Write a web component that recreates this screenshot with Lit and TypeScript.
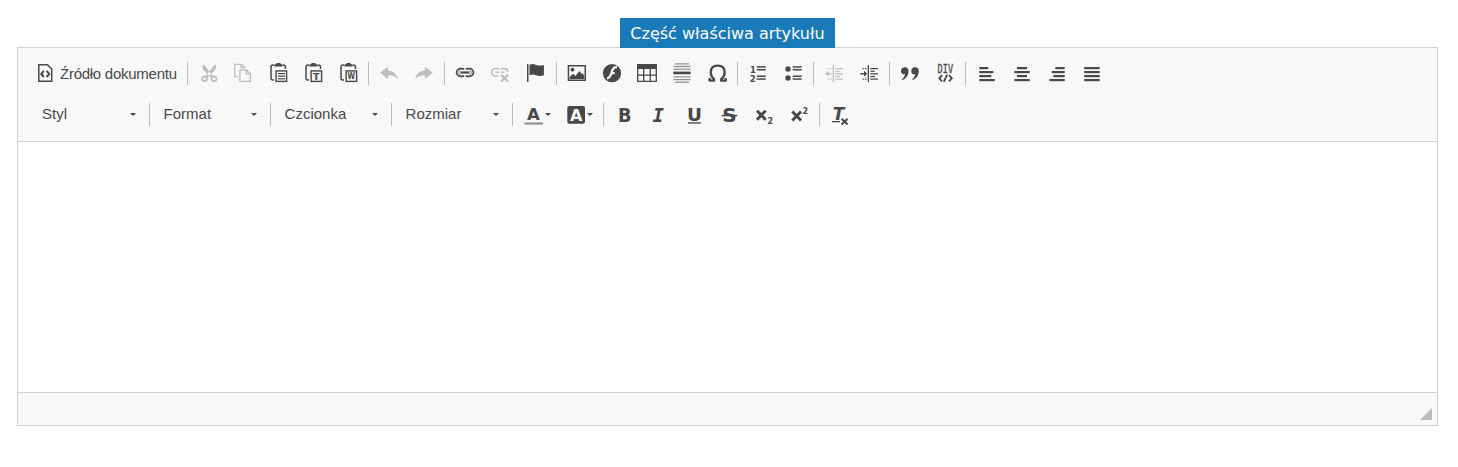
import { LitElement, html, css, svg } from "lit";
import { customElement, property } from "lit/decorators.js";

const bars = (rows: number[][], h = 1.7) =>
  rows.map(([x, y, w]) => svg`<rect x=${x} y=${y} width=${w} height=${h} />`);

const clipboard = svg`
  <path d="M8 4H7Q5 4 5 6V17Q5 19 7 19H8M17 4Q19.500 4 19.500 6V8" fill="none" stroke="currentColor" stroke-width="1.500" />
  <path d="M8.300 5.400V4Q8.300 3.300 9.300 3.300H10Q10.200 2 11.300 2H13.700Q14.800 2 15 3.300H15.700Q16.700 3.300 16.700 4V5.400Z" />
  <rect x="10.100" y="9.900" width="10.500" height="10.500" fill="none" stroke="currentColor" stroke-width="1.400" />`;

const chain = svg`<g fill="none" stroke="currentColor" stroke-width="1.700">
  <path d="M11 8.500Q10.500 7.600 9 7.600H7.500A3.900 3.900 0 0 0 7.500 15.400H9Q10.500 15.400 11 14.500M13 8.500Q13.500 7.600 15 7.600H16.500A3.900 3.900 0 0 1 16.500 15.400H15Q13.500 15.400 13 14.500" />
  <path d="M7.500 13.500A1.900 1.900 0 0 1 7.500 9.600M16.500 9.600A1.900 1.900 0 0 1 16.500 13.500" stroke-width=".6" />
  <path d="M7.500 11.500H16.500" stroke-width="2.200" /></g>`;

const dent = svg`<rect x="10.700" y="4" width="1.300" height="17" />
  ${bars([[13.300, 7, 7.700], [13.300, 12.200, 7.700], [13.300, 17.500, 7.700]], 1.200)}
  ${bars([[13.300, 9.600, 4.500], [13.300, 14.900, 4.500]], 1.200)}
  ${bars([[5.500, 7, 1.400], [8, 7, 1.400], [5.500, 17.500, 1.400], [8, 17.500, 1.400]], 1.200)}`;

const icons: Record<string, unknown> = {
  source: svg`<path d="M5.800 3.800H14.500L18.700 8V20.200H5.800Z" fill="none" stroke="currentColor" stroke-width="1.500" />
    <path d="M10.800 9.800L8.300 12.900L10.800 16M13.700 9.800L16.200 12.900L13.700 16" fill="none" stroke="currentColor" stroke-width="2" />`,
  cut: svg`<path d="M6.300 4L8 3.800L17.300 15.500L14.500 16.500L7 8.500ZM20.300 4L18.600 3.800L9.500 15.500L12 16.500L19.500 8.500Z" />
    <g fill="none" stroke="currentColor" stroke-width="1.700"><circle cx="8.600" cy="17.700" r="2.400" /><circle cx="18" cy="17.700" r="2.400" /></g>`,
  copy: svg`<g fill="none" stroke="currentColor" stroke-width="1.300">
    <path d="M7 15.700H3.700V3.300H10.500L14 6.700M10 3.500V6.500H13.500" />
    <path d="M8.900 8.900H15.500L19.400 12.800V20.400H8.900ZM15.300 9V12.900H19.300" /></g>`,
  paste: svg`${clipboard}${bars([[12, 12, 7], [12, 14.600, 7], [12, 17.200, 7]], 1.200)}`,
  pasteText: svg`${clipboard}<text x="15.350" y="18.600" font-size="9.500">T</text>`,
  pasteWord: svg`${clipboard}<text x="15.350" y="18.400" font-size="9" textLength="7.500" lengthAdjust="spacingAndGlyphs">W</text>`,
  undo: svg`<path d="M3.200 11.700L11 5.700V9.400Q18.500 9.700 21 18.200Q17.500 14 11 14.200V18Z" />`,
  redo: svg`<path d="M20.900 11.700L13 5.700V9.400Q5.500 9.700 3 18.200Q6.500 14 13 14.200V18Z" />`,
  link: chain,
  unlink: svg`<g fill="none" stroke="currentColor" stroke-width="1.600">
    <path d="M11 8.500Q10.500 7.500 9 7.500H7.500A3.700 3.700 0 0 0 7.500 15H10.500M13 8.500Q13.500 7.500 15 7.500H16.500Q19.500 7.800 19.800 11M7.500 11.300H11.500M13.500 11.300H16.500" />
    <path d="M13 13.700L20 20.500M20 13.700L13 20.500" stroke-width="2.300" /></g>`,
  flag: svg`<rect x="4" y="3" width="1.500" height="18" />
    <path d="M6.500 3.700Q10 2.200 13 4Q17 5.200 20.900 3.900V14.300Q17 15.800 13 14.300Q10 12.700 6.500 14.200Z" />`,
  image: svg`<path d="M2.700 4H21V20H2.700ZM4.200 5.500V18.500H19.500V5.500Z" fill-rule="evenodd" />
    <circle cx="7.500" cy="8.700" r="1.900" /><path d="M4.700 18V16L8 12.800L10.500 15L14.500 10L16.500 13L17.500 12L19.200 15V18Z" />`,
  flash: svg`<circle cx="12" cy="12.200" r="9.100" />
    <path d="M17 6.200Q12.800 6 11.700 11Q10.500 16.500 7 17.500M10.500 12.200H14.700" fill="none" stroke="#f8f8f8" stroke-width="2.200" />`,
  table: svg`<rect x="2" y="3" width="20" height="5" />
    <path d="M2.700 8V20.300H21.300V8M2.700 14.200H21.300M8.700 8V20.300M15.300 8V20.300" fill="none" stroke="currentColor" stroke-width="1.300" />`,
  rule: svg`<g opacity=".6">${bars([[5, 2.300, 14], [3.500, 4.900, 17], [3.500, 7.600, 17], [3.500, 15.300, 17], [3.500, 18, 17], [5, 20.600, 14]], 1.200)}</g>
    <rect x="3.300" y="10.600" width="17.400" height="2.600" />`,
  omega: svg`<path d="M4.500 19.600H9V18Q5.800 15.600 5.800 11.300Q5.800 4.700 12.700 4.700Q19.600 4.700 19.600 11.300Q19.600 15.600 16.300 18V19.600H20.700M4.600 17V20.500M20.700 17V20.500" fill="none" stroke="currentColor" stroke-width="2.300" />`,
  ordered: svg`${bars([[10.700, 5.200, 9], [10.700, 8, 9], [10.700, 14.500, 9], [10.700, 17.300, 9]], 1.500)}
    <text x="7" y="11.500" font-size="8.500">1</text><text x="6.700" y="20.800" font-size="8.500">2</text>`,
  bullets: svg`${bars([[11.700, 5.200, 9], [11.700, 8, 9], [11.700, 14.500, 9], [11.700, 17.300, 9]], 1.500)}
    <circle cx="7" cy="8" r="2.700" /><circle cx="7" cy="17" r="2.700" />`,
  outdent: svg`${dent}<path d="M3.300 12.800L6.500 10V12.200H9.500V13.400H6.500V15.600Z" />`,
  indent: svg`${dent}<path d="M10.200 12.800L7 9.800V12H3.300V13.600H7V15.800Z" />`,
  quote: svg`<path d="M7 6.300Q10.800 6.500 10.500 10.700Q10 16.800 4.300 19.300L3.900 18.500Q6.600 16.500 7 13.300Q3 13.800 3 10Q3.200 6.400 7 6.300ZM17 6.300Q21 6.500 20.800 10.700Q20.200 16.800 14.600 19.300L14.200 18.500Q16.900 16.500 17.200 13.300Q13.300 13.800 13.300 10Q13.500 6.400 17 6.300Z" />`,
  div: svg`<text class="thin" x="12.300" y="12" font-size="12.500" textLength="15.500" lengthAdjust="spacingAndGlyphs">DIV</text>
    <path d="M9 14.200L6.300 17.300L9 20.400M16 14.200L18.800 17.300L16 20.400M14.200 13.700L10.800 20.800" fill="none" stroke="currentColor" stroke-width="1.800" />`,
  left: bars([[5.300, 6, 9], [5.300, 10, 14], [5.300, 14, 12], [5.300, 18, 15.400]], 2.200),
  center: bars([[8, 6, 10], [5.300, 10, 15.400], [8, 14, 10], [5.300, 18, 15.400]], 2.200),
  right: bars([[11.300, 6, 9.400], [7.700, 10, 13], [9.300, 14, 11.400], [5.500, 18, 15.200]], 2.200),
  justify: bars([[5.200, 6, 15.500], [5.200, 10, 15.500], [5.200, 14, 15.500], [5.200, 18, 15.500]], 2.200),
  color: svg`<text x="12.300" y="17.800" font-size="16.500">A</text><rect x="3.300" y="20.300" width="18.700" height="2.400" fill="#999" />`,
  fill: svg`<rect x="4.300" y="4" width="17.700" height="17.700" rx="2" /><text x="13.100" y="18.600" font-size="16" fill="#f8f8f8">A</text>`,
  bold: svg`<text x="12.700" y="20" font-size="19" textLength="13.500" lengthAdjust="spacingAndGlyphs">B</text>`,
  italic: svg`<text class="mono" x="11.200" y="20" font-size="19" font-style="italic">I</text>`,
  underline: svg`<text x="12.500" y="18.600" font-size="17.500" textLength="15" lengthAdjust="spacingAndGlyphs">U</text><rect x="6" y="20.300" width="13" height="1.300" />`,
  strike: svg`<text x="12.500" y="20" font-size="19" textLength="14.500" lengthAdjust="spacingAndGlyphs">S</text><rect x="4.700" y="12.800" width="15.600" height="1.500" />`,
  sub: svg`<path d="M5 8.700L13.700 17.700M13.700 8.700L5 17.700" stroke="currentColor" stroke-width="2.900" />
    <text x="18.300" y="21.700" font-size="8">2</text>`,
  sup: svg`<path d="M5.300 9.500L14 18.500M14 9.500L5.300 18.500" stroke="currentColor" stroke-width="2.900" />
    <text x="18.300" y="11.700" font-size="8">2</text>`,
  erase: svg`<text x="10.600" y="18" font-size="17" font-style="italic">T</text><rect x="4" y="19" width="8" height="1.300" />
    <path d="M13.600 16.700L19.500 22.500M19.500 16.700L13.600 22.500" stroke="currentColor" stroke-width="1.900" />`,
};

const disabled = new Set(["cut", "copy", "undo", "redo", "unlink", "outdent"]);

@customElement("editor-icon")
class EditorIcon extends LitElement {
  @property() name = "";
  static styles = css`
    :host { display: block; width: 25px; height: 25px; flex: none; }
    svg { display: block; overflow: visible; }
    text { font-family: "DejaVu Sans", sans-serif; font-weight: 700; text-anchor: middle; }
    .mono { font-family: "DejaVu Sans Mono", monospace; }
    .thin { font-family: "DejaVu Sans Mono", monospace; font-weight: 400; stroke: currentColor; stroke-width: .3px; }
  `;
  render() {
    return html`<svg width="25" height="25" viewBox="0 0 25 25" fill="currentColor">${icons[this.name]}</svg>`;
  }
}

@customElement("app-root")
class AppRoot extends LitElement {
  static styles = css`
    :host {
      display: flex; flex-direction: column; align-items: center; box-sizing: border-box;
      height: 467px; padding: 18px 20px 41px 17px; background: #fff;
      color: #484848; font: 15px/25px "Liberation Sans", Arial, sans-serif;
    }
    .title {
      position: relative; z-index: 1; box-sizing: border-box; width: 215px; height: 30px;
      margin-bottom: -1px; background: #197aba; color: #fff; text-align: center; white-space: nowrap;
      font: 16px/31px Verdana, "DejaVu Sans", sans-serif;
    }
    .editor {
      flex: 1; align-self: stretch; box-sizing: border-box; border: 1px solid #d1d1d1;
      display: flex; flex-direction: column;
    }
    .toolbar {
      background: #f8f8f8; border-bottom: 1px solid #d1d1d1; padding: 13px 0 14px 15px;
      display: flex; flex-direction: column; gap: 16px;
    }
    .row { display: flex; height: 25px; }
    .source { display: flex; width: 152px; gap: 2px; white-space: nowrap; letter-spacing: -.26px; }
    .button { display: flex; box-sizing: border-box; width: 35px; padding-left: 5px; }
    .flag { width: 36px; }
    .color, .fill { width: 42px; align-items: center; }
    .fill { width: 43px; }
    .disabled { color: #bdbdbd; }
    .sep { width: 1px; height: 23px; margin: 1px 3px 0 2px; background: #bcbcbc; flex: none; }
    .combo { display: flex; box-sizing: border-box; width: 115px; padding: 0 11px 0 10.6px; align-items: center; justify-content: space-between; }
    .combo:first-child { width: 114px; padding-left: 9px; }
    .label { height: 25px; line-height: 24px; }
    .arrow { width: 0; height: 0; border: 3px solid transparent; border-top-color: #484848; border-bottom: 0; flex: none; }
    .color .arrow, .fill .arrow { margin-left: -1px; }
    .content { flex: 1; background: #fff; }
    .status {
      height: 32px; background: #f8f8f8; border-top: 1px solid #d1d1d1;
      display: flex; justify-content: flex-end; align-items: flex-end;
    }
    .grip { width: 12px; height: 12px; margin: 0 5px 5px 0; background: #bcbcbc; clip-path: polygon(100% 0, 100% 100%, 0 100%); }
  `;
  button(name: string) {
    return html`<div class="button ${name} ${disabled.has(name) ? "disabled" : ""}">
      <editor-icon name=${name}></editor-icon>${name === "color" || name === "fill" ? html`<span class="arrow"></span>` : ""}
    </div>`;
  }
  groups(list: string[][]) {
    return list.map((group) => html`<span class="sep"></span>${group.map((n) => this.button(n))}`);
  }
  render() {
    return html`
      <div class="title">Część właściwa artykułu</div>
      <div class="editor">
        <div class="toolbar">
          <div class="row">
            <div class="source"><editor-icon name="source"></editor-icon><span>Źródło dokumentu</span></div>
            ${this.groups([
              ["cut", "copy", "paste", "pasteText", "pasteWord"],
              ["undo", "redo"],
              ["link", "unlink", "flag"],
              ["image", "flash", "table", "rule", "omega"],
              ["ordered", "bullets"],
              ["outdent", "indent"],
              ["quote", "div"],
              ["left", "center", "right", "justify"],
            ])}
          </div>
          <div class="row">
            ${["Styl", "Format", "Czcionka", "Rozmiar"].map((label, i) => html`${i ? html`<span class="sep"></span>` : ""}<div class="combo"><span class="label">${label}</span><span class="arrow"></span></div>`)}
            ${this.groups([["color", "fill"], ["bold", "italic", "underline", "strike", "sub", "sup"], ["erase"]])}
          </div>
        </div>
        <div class="content"></div>
        <div class="status"><span class="grip"></span></div>
      </div>`;
  }
}
